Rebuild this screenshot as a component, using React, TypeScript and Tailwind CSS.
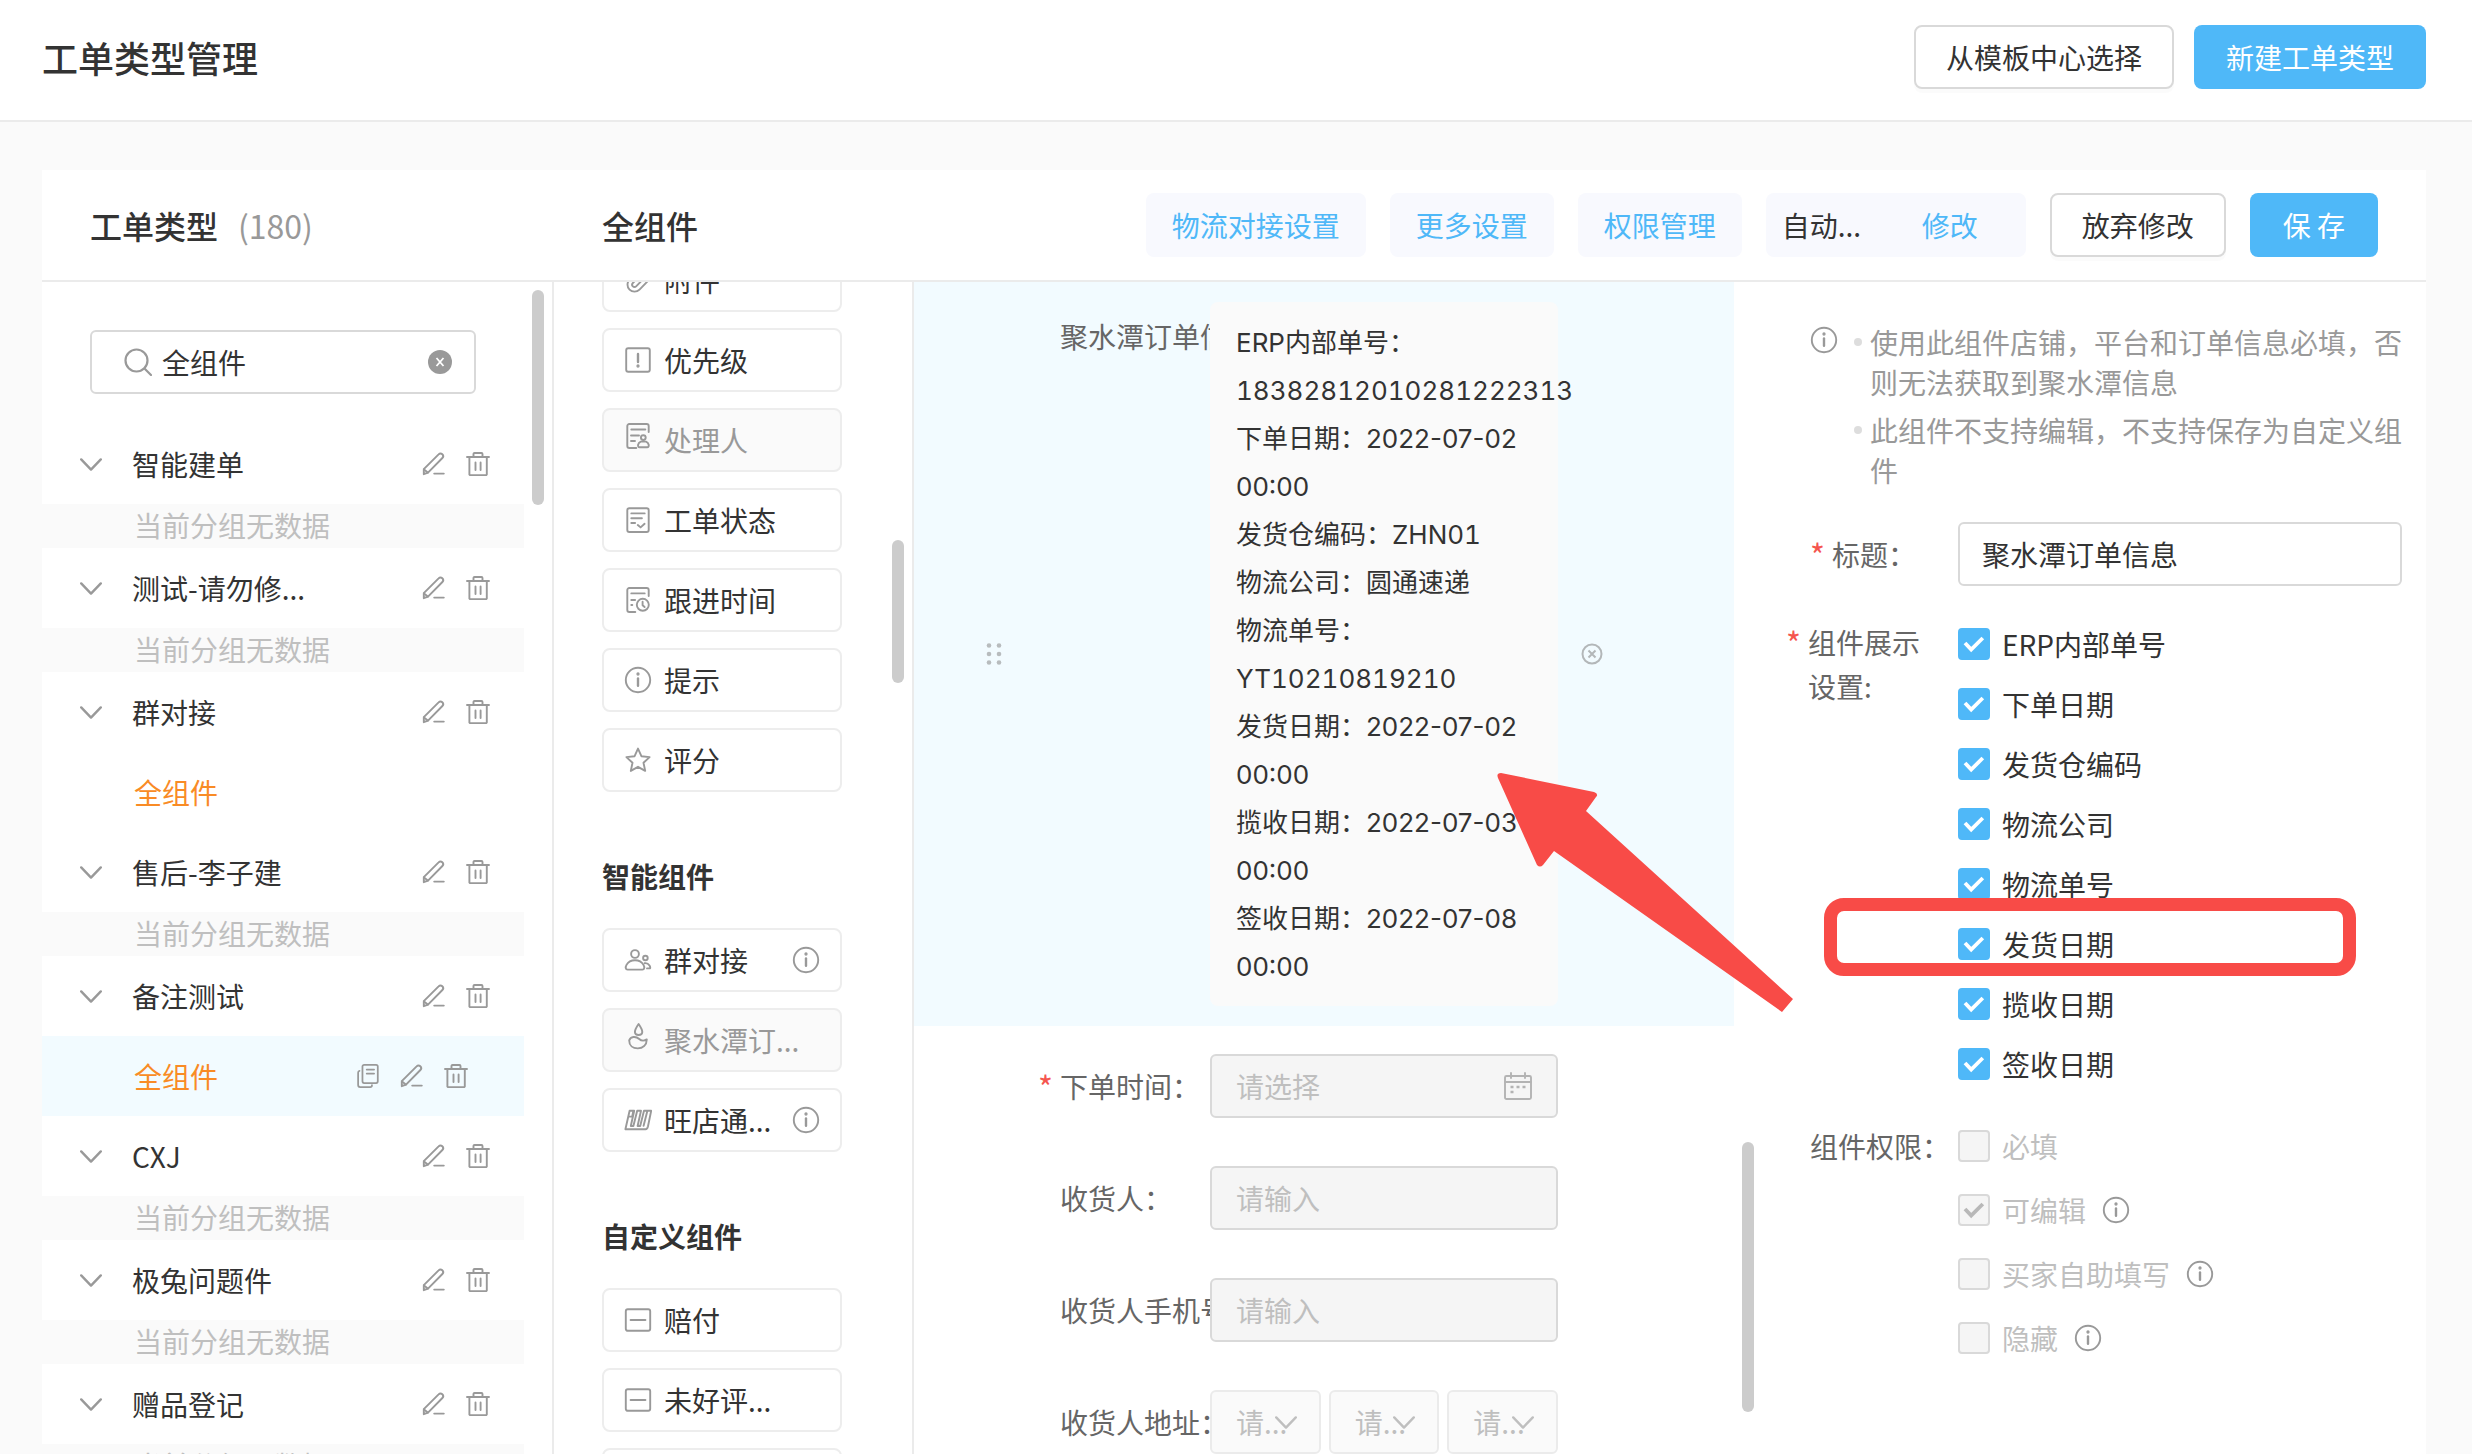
import type { ReactNode } from 'react';
import clsx from 'clsx';
import { Paperclip } from 'lucide-react';

type IconProps = { children: ReactNode; size?: string; box?: string };

function Icon({ children, size = 'size-7', box = '0 0 28 28' }: IconProps) {
    return (
        <svg viewBox={box} className={clsx(size, 'shrink-0')} fill="none" stroke="currentColor" strokeWidth={1.9} strokeLinecap="round" strokeLinejoin="round" aria-hidden="true">
            {children}
        </svg>
    );
}

const InfoIcon = () => (
    <Icon>
        <circle cx="14" cy="14" r="12.2" />
        <path d="M14 12.4v7.4" strokeWidth={2.4} />
        <circle cx="14" cy="8" r="0.7" />
    </Icon>
);

const PencilIcon = () => (
    <Icon size="size-6" box="0 0 24 24">
        <path d="M1.8 22.2v-5L16.6 2.4a2.5 2.5 0 0 1 3.8 3.6L6 20.6z" />
        <path d="M2 17.4l3.8 3.2M12.2 21.6h9.6" />
    </Icon>
);

const TrashIcon = () => (
    <Icon size="size-6" box="0 0 24 24">
        <path d="M1 5h22M7.5 5V2a1 1 0 0 1 1-1h7a1 1 0 0 1 1 1v3M3.4 5v17a1 1 0 0 0 1.2 1.2h15a1 1 0 0 0 1.2-1.2V5M9.5 10.5v7.6M14.6 10.5v7.6" />
    </Icon>
);

const CopyIcon = () => (
    <Icon size="size-6" box="0 0 26 26">
        <rect x="7" y="1" width="16.6" height="19.6" rx="1.8" />
        <path d="M11.6 6h8M11.6 10.4h8M3.8 7.4a2 2 0 0 0-1.5 2V22.8a2.2 2.2 0 0 0 2.2 2.2h10.8a2 2 0 0 0 2-2" />
    </Icon>
);

const ChevronIcon = () => (
    <svg viewBox="0 0 22 14" className="h-3.5 w-[22px] shrink-0" fill="none" stroke="currentColor" strokeWidth={2.4} strokeLinecap="round" strokeLinejoin="round" aria-hidden="true">
        <path d="M1.2 2.4L11 12.6l9.8-10.2" />
    </svg>
);

const icons: Record<string, ReactNode> = {
    clip: <Paperclip className="size-7 shrink-0" strokeWidth={1.6} />,
    priority: (
        <Icon>
            <rect x="2.2" y="2.2" width="23.6" height="23.6" rx="2" />
            <path d="M14 8v8" strokeWidth={2.4} />
            <circle cx="14" cy="20" r="0.7" />
        </Icon>
    ),
    person: (
        <Icon>
            <path d="M24.7 10V4a2 2 0 0 0-2-2H5.3a2 2 0 0 0-2 2v20a2 2 0 0 0 2 2h7M7.3 7.5h14M7 13.5h8M7 19h4" />
            <circle cx="19.3" cy="15.6" r="2.4" />
            <path d="M15.6 25.2h7.6c2.6 0 1.8-4.6-1.2-5.6h-5.2c-3 1-3.8 5.6-1.2 5.6z" />
        </Icon>
    ),
    status: (
        <Icon>
            <rect x="3.3" y="2.2" width="21.4" height="23.8" rx="2" />
            <path d="M7.3 7.4h13.4M7.3 12.2h10.6M7.3 17h3.8M13.8 19l2.8 2.4 4-3.6" />
        </Icon>
    ),
    clock: (
        <Icon>
            <path d="M24.7 10V4a2 2 0 0 0-2-2H5.3a2 2 0 0 0-2 2v20a2 2 0 0 0 2 2h6M7.3 7.4h13.4M7.3 14h3.8M7.3 19h1" />
            <circle cx="18.8" cy="18.8" r="6" />
            <path d="M18.6 15.8v3.4l2 1.8" />
        </Icon>
    ),
    star: (
        <Icon>
            <path d="M14 2.6l3.4 7.6 8.2.9-6.1 5.6 1.7 8.2L14 20.8l-7.2 4.1 1.7-8.2-6.1-5.6 8.2-.9z" />
        </Icon>
    ),
    info: <InfoIcon />,
    group: (
        <Icon>
            <circle cx="11" cy="8" r="3.9" />
            <path d="M3.6 23.6h14.8c4.2 0 1.2-9.4-7.4-9.4s-11.6 9.4-7.4 9.4z" />
            <circle cx="21.4" cy="12" r="2.3" />
            <path d="M20.6 17.2c4.6-.8 6.8 5.2 5 5.2h-2.6" />
        </Icon>
    ),
    drop: (
        <Icon>
            <path d="M14.6 2c-5.2 7.4-4.6 11 0 11s5.2-3.6 0-11z" />
            <path d="M5.2 18.4c0 5 3.6 8 8.6 8s8.8-3.2 9-9c-3.6 2.2-5.4 1.6-7.6-.4-3.4-3-8.6-2.8-10 1.4z" />
        </Icon>
    ),
    wdt: (
        <Icon>
            <path d="M5.6 4.8h4.6L6.8 20h2.6l3.8-15.2h3.8L13.6 20h2.6L20 4.8h3.4M5.6 4.8L1.4 23.2h20.2c1.4 0 2-1.4 2.4-3l3.2-15.400h-3.800l-3.800 15M4.200 10.600h3.400M9.400 4.800l-1.200 5.600" />
        </Icon>
    ),
    custom: (
        <Icon>
            <rect x="1.8" y="3.2" width="24.4" height="21.6" rx="2" />
            <path d="M6.6 14h14.8" />
        </Icon>
    ),
};

type Group = { name: string; child?: string; active?: boolean };

const groups: Group[] = [
    { name: '智能建单' },
    { name: '测试-请勿修...' },
    { name: '群对接', child: '全组件' },
    { name: '售后-李子建' },
    { name: '备注测试', child: '全组件', active: true },
    { name: 'CXJ' },
    { name: '极兔问题件' },
    { name: '赠品登记' },
];

type Widget = { icon: string; name: string; disabled?: boolean; info?: boolean };

const basicWidgets: Widget[] = [
    { icon: 'clip', name: '附件' },
    { icon: 'priority', name: '优先级' },
    { icon: 'person', name: '处理人', disabled: true },
    { icon: 'status', name: '工单状态' },
    { icon: 'clock', name: '跟进时间' },
    { icon: 'info', name: '提示' },
    { icon: 'star', name: '评分' },
];

const smartWidgets: Widget[] = [
    { icon: 'group', name: '群对接', info: true },
    { icon: 'drop', name: '聚水潭订...', disabled: true },
    { icon: 'wdt', name: '旺店通...', info: true },
];

const customWidgets: Widget[] = [
    { icon: 'custom', name: '赔付' },
    { icon: 'custom', name: '未好评...' },
    { icon: 'custom', name: '差评' },
];

type OrderLine = { text: string; code?: boolean };

const orderInfo: OrderLine[] = [
    { text: 'ERP内部单号：18382812010281222313', code: true },
    { text: '下单日期：2022-07-02 00:00' },
    { text: '发货仓编码：ZHN01', code: true },
    { text: '物流公司：圆通速递' },
    { text: '物流单号：YT10210819210', code: true },
    { text: '发货日期：2022-07-02 00:00' },
    { text: '揽收日期：2022-07-03 00:00' },
    { text: '签收日期：2022-07-08 00:00' },
];

const displayOptions = ['ERP内部单号', '下单日期', '发货仓编码', '物流公司', '物流单号', '发货日期', '揽收日期', '签收日期'];

const permissions = [
    { name: '必填', checked: false, info: false },
    { name: '可编辑', checked: true, info: true },
    { name: '买家自助填写', checked: false, info: true },
    { name: '隐藏', checked: false, info: true },
];

function Header() {
    return (
        <header className="flex h-[122px] shrink-0 items-center justify-between border-b-2 border-[#ebebeb] bg-white pr-[46px] pb-1.5 pl-[42px]">
            <h1 className="text-[36px] font-medium">工单类型管理</h1>
            <div className="flex gap-5">
                <button className="h-16 rounded-lg border-2 border-[#d9d9d9] bg-white px-[30px] shadow-[0_4px_0_rgba(0,0,0,0.015)]">从模板中心选择</button>
                <button className="h-16 rounded-lg bg-[#4fb8f8] px-8 text-white">新建工单类型</button>
            </div>
        </header>
    );
}

function Toolbar() {
    return (
        <div className="flex h-28 shrink-0 items-center border-b-2 border-[#ebebeb] pr-12 pl-12">
            <h2 className="w-[512px] text-[32px] font-medium">
                工单类型<span className="ml-5 font-normal text-[#999]">(180)</span>
            </h2>
            <h2 className="text-[32px] font-medium">全组件</h2>
            <div className="ml-auto flex gap-6">
                <button className="h-16 rounded-lg bg-[#f8f9fe] px-[26px] text-[#4fb8f8]">物流对接设置</button>
                <button className="h-16 rounded-lg bg-[#f8f9fe] px-[26px] text-[#4fb8f8]">更多设置</button>
                <button className="h-16 rounded-lg bg-[#f8f9fe] px-[26px] text-[#4fb8f8]">权限管理</button>
                <div className="flex h-16 w-[260px] items-center justify-between rounded-lg bg-[#f8f9fe] pr-12 pl-4">
                    <span>自动...</span>
                    <button className="text-[#4fb8f8]">修改</button>
                </div>
                <button className="h-16 rounded-lg border-2 border-[#d9d9d9] bg-white px-[30px] shadow-[0_4px_0_rgba(0,0,0,0.015)]">放弃修改</button>
                <button className="h-16 rounded-lg bg-[#4fb8f8] px-[33px] text-white">保 存</button>
            </div>
        </div>
    );
}

function RowActions() {
    return (
        <>
            <button aria-label="编辑"><PencilIcon /></button>
            <button aria-label="删除"><TrashIcon /></button>
        </>
    );
}

function Sidebar() {
    return (
        <aside className="relative w-[512px] shrink-0 overflow-hidden border-r-2 border-[#ebebeb] pt-12 pr-7">
            <label className="mr-12 mb-[30px] ml-12 flex h-16 items-center rounded-md border-2 border-[#d9d9d9] pr-[22px] pl-8">
                <svg viewBox="0 0 28 28" className="size-7 shrink-0 text-[#999]" fill="none" stroke="currentColor" strokeWidth={2.2} strokeLinecap="round" aria-hidden="true">
                    <circle cx="12.5" cy="12.5" r="11" />
                    <path d="M20.5 20.5L27 27" />
                </svg>
                <input type="text" aria-label="搜索" defaultValue="全组件" className="ml-2.5 w-0 flex-1 outline-none" />
                <svg viewBox="0 0 24 24" className="size-6 shrink-0" aria-hidden="true">
                    <circle cx="12" cy="12" r="12" fill="#999" />
                    <path d="M8.5 8l7 8M15.5 8l-7 8" stroke="#fff" strokeWidth={1.8} />
                </svg>
            </label>
            <ul>
                {groups.map((group) => (
                    <li key={group.name}>
                        <div className="flex h-20 items-center gap-5 pr-[34px] pl-[38px] text-[#999]">
                            <ChevronIcon />
                            <span className="ml-2.5 flex-1 text-[#333]">{group.name}</span>
                            <RowActions />
                        </div>
                        {group.child ? (
                            <div className={clsx('flex h-20 items-center gap-5 pr-14 pl-[92px] text-[#999]', group.active && 'bg-[#f2fbff]')}>
                                <a href="#" className="flex-1 text-[#f98b25]">{group.child}</a>
                                {group.active && (
                                    <>
                                        <button aria-label="复制"><CopyIcon /></button>
                                        <RowActions />
                                    </>
                                )}
                            </div>
                        ) : (
                            <p className="h-11 bg-[#fafafa] pl-[92px] leading-[42px] text-[#bfbfbf]">当前分组无数据</p>
                        )}
                    </li>
                ))}
            </ul>
            <span className="absolute top-2 right-2 h-[215px] w-3 rounded-full bg-[#ccc]" />
        </aside>
    );
}

function WidgetList({ items }: { items: Widget[] }) {
    return (
        <div className="flex flex-col gap-4">
            {items.map((item) => (
                <button
                    key={item.name}
                    disabled={item.disabled}
                    className={clsx(
                        'flex h-16 items-center gap-3 rounded-lg border-2 border-[#ededed] px-5 text-left',
                        item.disabled ? 'bg-[#fafafa] text-[#999]' : 'bg-white'
                    )}
                >
                    <span className={clsx('text-[#999]', item.disabled && 'pb-2')}>{icons[item.icon]}</span>
                    <span className="flex-1 whitespace-nowrap">{item.name}</span>
                    {item.info && <span className="text-[#999]"><InfoIcon /></span>}
                </button>
            ))}
        </div>
    );
}

function WidgetPanel() {
    return (
        <section className="relative w-[360px] shrink-0 overflow-hidden border-r-2 border-[#ebebeb] pr-[70px] pl-12">
            <div className="-mt-[34px]">
                <WidgetList items={basicWidgets} />
                <h3 className="mt-16 mb-8 leading-10 font-semibold">智能组件</h3>
                <WidgetList items={smartWidgets} />
                <h3 className="mt-16 mb-8 leading-10 font-semibold">自定义组件</h3>
                <WidgetList items={customWidgets} />
            </div>
            <span className="absolute top-[258px] right-2 h-[143px] w-3 rounded-full bg-[#ccc]" />
        </section>
    );
}

const Required = () => <span className="w-[22px] shrink-0 text-[32px] text-[#f5554f]">*</span>;

type FieldProps = { id: string; label: string; required?: boolean; children: ReactNode };

function Field({ id, label, required, children }: FieldProps) {
    return (
        <div className="grid grid-cols-[124px_22px_150px_minmax(0,1fr)_176px] items-center pt-7 pb-5">
            <span className="col-start-2 flex">{required && <Required />}</span>
            <label htmlFor={id} className="overflow-hidden whitespace-nowrap text-[#666]">{label}</label>
            {children}
        </div>
    );
}

const inputClass = 'h-16 w-full rounded-md border-2 border-[#d9d9d9] bg-[#f5f5f5] px-6 placeholder:text-[#bfbfbf]';

function FormCanvas() {
    return (
        <section className="relative min-w-0 flex-1 overflow-hidden pr-[22px]">
            <div className="grid grid-cols-[146px_150px_minmax(0,1fr)_176px] items-center bg-[#f2fbff] py-5">
                <svg viewBox="0 0 18 24" className="ml-[71px] h-6 w-[18px] fill-[#b8bcbe]" aria-hidden="true">
                    <circle cx="4" cy="3.5" r="2.3" />
                    <circle cx="14" cy="3.5" r="2.3" />
                    <circle cx="4" cy="12" r="2.3" />
                    <circle cx="14" cy="12" r="2.3" />
                    <circle cx="4" cy="20.5" r="2.3" />
                    <circle cx="14" cy="20.5" r="2.3" />
                </svg>
                <span className="self-start overflow-hidden pt-3.5 leading-10 whitespace-nowrap text-[#666]">聚水潭订单信息:</span>
                <div className="rounded-lg bg-[#fafafa] px-[26px] pt-[17px] pb-[15px] font-['Inter','Noto_Sans_CJK_SC',sans-serif] text-[26px] leading-[48px]">
                    {orderInfo.map((line) => (
                        <p key={line.text} className={clsx(line.code && 'tabular-nums')}>{line.text}</p>
                    ))}
                </div>
                <button aria-label="移除" className="ml-[23px] size-[22px] text-[#b3b7b9]">
                    <svg viewBox="0 0 22 22" fill="none" stroke="currentColor" strokeWidth={2} aria-hidden="true">
                        <circle cx="11" cy="11" r="9.5" />
                        <path d="M7.5 7.5l7 7M14.5 7.5l-7 7" />
                    </svg>
                </button>
            </div>
            <Field id="order-time" label="下单时间：" required>
                <div className="grid items-center">
                    <input id="order-time" disabled placeholder="请选择" className={clsx(inputClass, '[grid-area:1/1]')} />
                    <span className="mr-[26px] justify-self-end text-[#b3b3b3] [grid-area:1/1]">
                        <Icon>
                            <rect x="1" y="4" width="26" height="23" rx="1.5" />
                            <path d="M1 10h26M7 1v5M21 1v5" />
                            <path d="M6.5 15h3M12.5 15h3M18.5 15h3M6.5 20h3" strokeWidth={2.4} strokeLinecap="butt" />
                        </Icon>
                    </span>
                </div>
            </Field>
            <Field id="receiver" label="收货人：">
                <input id="receiver" disabled placeholder="请输入" className={inputClass} />
            </Field>
            <Field id="phone" label="收货人手机号：">
                <input id="phone" disabled placeholder="请输入" className={inputClass} />
            </Field>
            <Field id="province" label="收货人地址：">
                <div className="grid grid-cols-3 gap-2">
                    {['province', 'city', 'district'].map((part) => (
                        <div key={part} className="grid items-center text-[#bfbfbf]">
                            <select id={part} disabled aria-label={part} className="h-16 w-full appearance-none rounded-md border-2 border-[#ebebeb] bg-[#fafafa] pl-6 opacity-100 [grid-area:1/1]">
                                <option>请...</option>
                            </select>
                            <span className="mr-6 justify-self-end [grid-area:1/1]"><ChevronIcon /></span>
                        </div>
                    ))}
                </div>
            </Field>
            <span className="absolute top-[860px] right-0.5 h-[270px] w-3 rounded-full bg-[#ccc]" />
        </section>
    );
}

type CheckProps = { label: string; checked?: boolean; disabled?: boolean };

function Check({ label, checked, disabled }: CheckProps) {
    return (
        <label className={clsx('flex h-8 items-center gap-3', disabled && 'text-[#bfbfbf]')}>
            <span className="grid size-8">
                <input
                    type="checkbox"
                    defaultChecked={checked}
                    disabled={disabled}
                    className="peer size-8 appearance-none rounded-sm border-2 border-[#d9d9d9] bg-white [grid-area:1/1] checked:border-[#4fb8f8] checked:bg-[#4fb8f8] disabled:border-[#d9d9d9] disabled:bg-[#f5f5f5]"
                />
                <svg
                    viewBox="0 0 32 32"
                    className="pointer-events-none invisible size-8 text-white [grid-area:1/1] peer-checked:visible peer-disabled:text-[#b8b8b8]"
                    fill="none"
                    stroke="currentColor"
                    strokeWidth={3.8}
                    aria-hidden="true"
                >
                    <path d="M7 15l6.2 6.6L24.8 10" />
                </svg>
            </span>
            {label}
        </label>
    );
}

// red frame and arrow that point from one option to its line in the form
function Callout() {
    return (
        <>
            <span className="pointer-events-none absolute -top-[30px] -left-[134px] z-10 h-[78px] w-[532px] rounded-[20px] border-[13px] border-[#f84b47]" />
            <svg viewBox="0 0 300 244" className="pointer-events-none absolute -top-[158px] -left-[462px] z-10 h-[244px] w-[300px]" fill="#f84b47" aria-hidden="true">
                <path d="M5 3L98 22q5 2 2 5l-10 14L297 229l-11 13L58 81l-11 14q-3 3-6 0L2 8Q0 3 5 3z" />
            </svg>
        </>
    );
}

function Settings() {
    return (
        <section className="w-[670px] shrink-0 pt-10 pr-6 pl-[54px]">
            <div className="flex text-[#999]">
                <span className="mt-1"><InfoIcon /></span>
                <ul className="ml-4 flex flex-1 flex-col gap-2 leading-10">
                    <li className="flex gap-2">
                        <i className="mt-4 size-2 shrink-0 rounded-full bg-[#ddd]" />
                        使用此组件店铺，平台和订单信息必填，否则无法获取到聚水潭信息
                    </li>
                    <li className="flex gap-2">
                        <i className="mt-4 size-2 shrink-0 rounded-full bg-[#ddd]" />
                        此组件不支持编辑，不支持保存为自定义组件
                    </li>
                </ul>
            </div>
            <div className="mt-8 flex items-center">
                <label htmlFor="title" className="flex w-[148px] text-[#666]">
                    <Required />标题：
                </label>
                <input id="title" defaultValue="聚水潭订单信息" className="h-16 min-w-0 flex-1 rounded-md border-2 border-[#d9d9d9] px-[22px]" />
            </div>
            <fieldset className="mt-[34px] -ml-6 flex">
                <div className="flex w-[172px] leading-[44px] text-[#666]">
                    <Required />
                    <span className="w-28">组件展示<br />设置:</span>
                </div>
                <div className="mt-2 flex flex-col gap-7">
                    {displayOptions.map((option) => (
                        <div key={option} className="relative">
                            <Check label={option} checked />
                            {option === '发货日期' && <Callout />}
                        </div>
                    ))}
                </div>
            </fieldset>
            <fieldset className="mt-[50px] flex">
                <div className="w-[148px] leading-8 text-[#666]">组件权限：</div>
                <div className="flex flex-col gap-8">
                    {permissions.map((item) => (
                        <div key={item.name} className="flex h-8 items-center gap-4">
                            <Check label={item.name} checked={item.checked} disabled />
                            {item.info && <span className="text-[#999]"><InfoIcon /></span>}
                        </div>
                    ))}
                </div>
            </fieldset>
        </section>
    );
}

export default function App() {
    return (
        <div className="flex h-screen flex-col overflow-hidden bg-[#fafafa] font-['Noto_Sans_CJK_SC',sans-serif] text-[28px] leading-10 text-[#333]">
            <Header />
            <main className="mt-12 mr-[46px] ml-[42px] flex min-h-0 flex-1 flex-col bg-white">
                <Toolbar />
                <div className="flex min-h-0 flex-1">
                    <Sidebar />
                    <WidgetPanel />
                    <FormCanvas />
                    <Settings />
                </div>
            </main>
        </div>
    );
}
